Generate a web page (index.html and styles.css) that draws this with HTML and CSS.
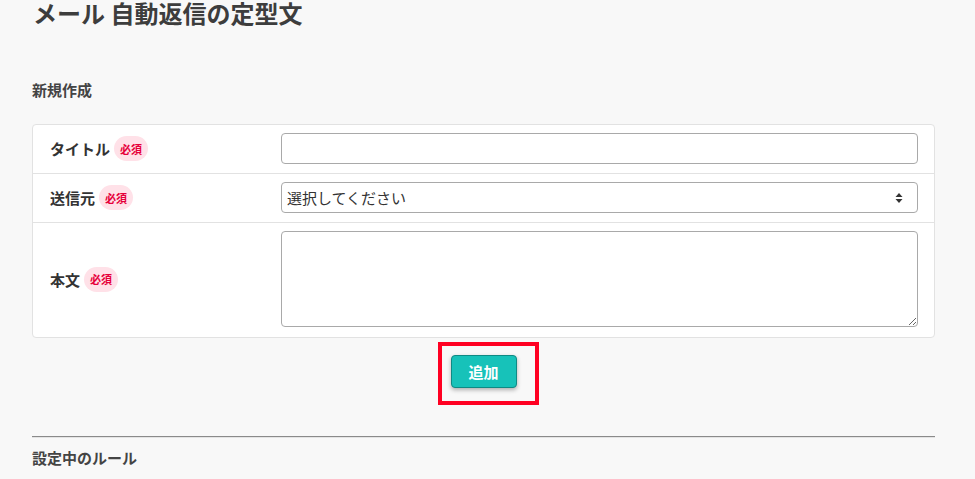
FILE: index.html
```html
<!DOCTYPE html>
<html lang="ja">
<head>
<meta charset="utf-8">
<title>メール 自動返信の定型文</title>
<link rel="stylesheet" href="styles.css">
</head>
<body>
<div class="page">
  <h1 class="title">メール 自動返信の定型文</h1>
  <button class="close" type="button" aria-label="閉じる">
    <svg width="20" height="20" viewBox="0 0 20 20"><path d="M3 3 L17 17 M17 3 L3 17" stroke="#444" stroke-width="3" stroke-linecap="round" fill="none"/></svg>
  </button>

  <h2 class="section">新規作成</h2>

  <div class="card">
    <div class="row">
      <div class="label">タイトル<span class="req">必須</span></div>
      <div class="field"><input class="input" type="text"></div>
    </div>
    <div class="row">
      <div class="label">送信元<span class="req">必須</span></div>
      <div class="field">
        <div class="select">
          <span>選択してください</span>
          <svg width="8" height="12" viewBox="0 0 8 12"><path d="M4 1 L7.5 5 H0.5 Z M4 11 L7.5 7 H0.5 Z" fill="#333"/></svg>
        </div>
      </div>
    </div>
    <div class="row last">
      <div class="label">本文<span class="req">必須</span></div>
      <div class="field"><textarea class="textarea"></textarea></div>
    </div>
  </div>

  <div class="actions">
    <div class="btn-wrap">
      <button class="btn" type="button">追加</button>
      <span class="highlight"></span>
    </div>
  </div>

  <hr class="divider">
  <h2 class="section rules">設定中のルール</h2>
</div>
</body>
</html>
```
FILE: styles.css
```css
* { box-sizing: border-box; }
html, body { margin: 0; padding: 0; }
body {
  background: #f8f8f8;
  font-family: "Noto Sans CJK JP", "Noto Sans", sans-serif;
  color: #333;
  overflow: hidden;
}
.page {
  position: relative;
  padding: 0 40px 0 32px;
}
.title {
  margin: -2px 0 0;
  font-size: 24px;
  line-height: 30px;
  font-weight: 700;
  color: #3d3d3d;
  padding-left: 1px;
}
.close {
  position: absolute;
  left: 943px;
  top: -18px;
  width: 20px;
  height: 20px;
  padding: 0;
  border: 0;
  background: none;
}
.section {
  margin: 52px 0 0;
  font-size: 15px;
  line-height: 20px;
  font-weight: 700;
  color: #444;
}
.card {
  margin-top: 24px;
  background: #fff;
  border: 1px solid #e2e2e2;
  border-radius: 4px;
}
.row {
  display: grid;
  grid-template-columns: 248px 1fr;
  align-items: center;
  padding: 8px 16px 9px 0;
  border-bottom: 1px solid #e2e2e2;
}
.row.last { border-bottom: 0; padding-bottom: 10px; }
.label {
  display: flex;
  align-items: center;
  gap: 4px;
  padding-left: 17px;
  font-size: 15px;
  font-weight: 700;
  color: #333;
}
.req {
  display: inline-flex;
  align-items: center;
  height: 25px;
  padding: 0 6px;
  border-radius: 13px;
  background: #ffe1e8;
  color: #e6003a;
  font-size: 11px;
  font-weight: 700;
}
.input, .select, .textarea {
  display: block;
  width: 100%;
  height: 31px;
  border: 1px solid #a9a9a9;
  border-radius: 4px;
  background: #fff;
  font-family: inherit;
}
.select {
  display: flex;
  align-items: center;
  justify-content: space-between;
  padding: 0 14px 0 5px;
  font-size: 15px;
  color: #333;
}
.textarea {
  height: 96px;
  resize: vertical;
}
.actions {
  display: flex;
  justify-content: center;
  margin-top: 17px;
}
.btn-wrap { position: relative; }
.btn {
  display: block;
  width: 66px;
  height: 33px;
  padding: 0;
  border: 1px solid #0f8a84;
  border-radius: 4px;
  background: #17c2b9;
  color: #fff;
  font-family: inherit;
  font-size: 15px;
  font-weight: 700;
  box-shadow: 0 2px 4px rgba(0,0,0,0.3);
}
.highlight {
  position: absolute;
  left: -13px;
  top: -13px;
  width: 101px;
  height: 63px;
  border: 4px solid #ff0022;
}
.divider {
  margin: 48px 0 0;
  height: 0;
  border: 0;
  border-top: 1px solid #8a8a8a;
  border-bottom: 1px solid #e4e4e4;
}
.section.rules { margin-top: 10px; }
```
